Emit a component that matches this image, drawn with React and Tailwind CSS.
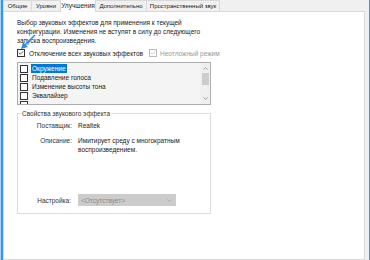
import { ChevronUp, ChevronDown, Check } from 'lucide-react';

const tabs = [
  { label: 'Общие', w: 'w-[29px]' },
  { label: 'Уровни', w: 'w-[30px]' },
  { label: 'Улучшения', w: 'w-[36px]', active: true },
  { label: 'Дополнительно', w: 'w-[52px]' },
  { label: 'Пространственный звук', w: 'w-[74px]' },
];

const effects = ['Окружение', 'Подавление голоса', 'Изменение высоты тона', 'Эквалайзер', ''];

const Box = ({ checked, disabled }) => (
  <span
    className={`w-[8px] h-[8px] shrink-0 border flex items-center justify-center bg-white ${
      disabled ? 'border-[#bcbcbc]' : 'border-[#333]'
    }`}
  >
    {checked && <Check size={8} strokeWidth={3} className={disabled ? 'text-[#bcbcbc]' : 'text-[#222]'} />}
  </span>
);

export default function App() {
  return (
    <div
      className="w-[370px] h-[260px] bg-[#f0f0f0] flex overflow-hidden text-[6.5px] leading-[9px] text-[#1a1a1a]"
      style={{ fontFamily: '"Liberation Sans", Arial, sans-serif' }}
    >
      <div className="w-[1px] bg-[#a9d1f5]" />
      <div className="w-[2px] bg-[#3d95e0]" />
      <div className="flex-1 flex flex-col">
        <div className="flex h-[11px] items-end">
          {tabs.map((t) =>
            t.active ? (
              <div
                key={t.label}
                className={`${t.w} shrink-0 whitespace-nowrap h-[13px] bg-white border border-b-0 border-[#d9d9d9] -mr-[1px] flex items-start justify-center pt-[1px] relative z-10 translate-y-[1px]`}
              >
                {t.label}
              </div>
            ) : (
              <div
                key={t.label}
                className={`${t.w} shrink-0 whitespace-nowrap text-[6px] h-[11px] bg-[#f0f0f0] border border-b-0 border-[#d9d9d9] -mr-[1px] flex items-center justify-center`}
              >
                {t.label}
              </div>
            )
          )}
        </div>
        <div className="w-[362px] flex-1 bg-white border border-[#d9d9d9] pl-[13px] pt-[6px]">
          <p className="text-[#222]">
            Выбор звуковых эффектов для применения к текущей
            <br />
            конфигурации. Изменения не вступят в силу до следующего
            <br />
            запуска воспроизведения.
          </p>
          <div className="relative mt-[3px] flex items-center h-[10px]">
            <svg className="absolute left-[2px] -top-[14px]" width="18" height="17" viewBox="0 0 18 17">
              <path d="M16 1 L5 12" stroke="#2a8fe0" strokeWidth="1.6" />
              <path d="M2 15 L4 8 L9 13 Z" fill="#2a8fe0" />
            </svg>
            <Box checked />
            <span className="ml-[4px]">Отключение всех звуковых эффектов</span>
            <span className="ml-[6px] flex items-center text-[#9a9a9a]">
              <Box checked disabled />
              <span className="ml-[3px]">Неотложный режим</span>
            </span>
          </div>
          <div className="mt-[4px] w-[194px] h-[43px] border border-[#adadad] bg-[#f4f4f4] flex overflow-hidden">
            <div className="flex-1 pt-[1px] pl-[2px]">
              {effects.map((e, i) => (
                <div key={i} className="flex items-center h-[9px]">
                  <Box />
                  <span className={`ml-[3px] px-[1px] ${i === 0 ? 'bg-[#0078d7] text-white' : ''}`}>{e}</span>
                </div>
              ))}
            </div>
            <div className="w-[10px] flex flex-col items-center bg-[#f0f0f0]">
              <ChevronUp size={7} className="text-[#606060] mt-[2px]" />
              <div className="w-[7px] h-[12px] bg-[#cdcdcd] mt-[1px]" />
              <div className="flex-1" />
              <ChevronDown size={7} className="text-[#606060] mb-[2px]" />
            </div>
          </div>
          <div className="mt-[8px] w-[194px] h-[101px] border border-[#dcdcdc] relative pt-[7px]">
            <span className="absolute -top-[5px] left-[3px] bg-white px-[1px] text-[#333]">Свойства звукового эффекта</span>
            <div className="flex">
              <span className="w-[54px] shrink-0 text-right text-[#333]">Поставщик:</span>
              <span className="ml-[6px]">Realtek</span>
            </div>
            <div className="flex mt-[6px]">
              <span className="w-[54px] shrink-0 text-right text-[#333]">Описание:</span>
              <span className="ml-[6px]">
                Имитирует среду с многократным
                <br />
                воспроизведением.
              </span>
            </div>
            <div className="flex items-center mt-[40px]">
              <span className="w-[53px] shrink-0 text-right text-[#333]">Настройка:</span>
              <div className="ml-[7px] w-[98px] h-[12px] bg-[#cccccc] flex items-center justify-between px-[3px] text-[#8a8a8a]">
                <span>&lt;Отсутствует&gt;</span>
                <ChevronDown size={7} className="text-[#9a9a9a]" />
              </div>
            </div>
          </div>
        </div>
      </div>
      <div className="w-[4px]" />
      <div className="w-[1px] bg-[#3d95e0]" />
    </div>
  );
}
